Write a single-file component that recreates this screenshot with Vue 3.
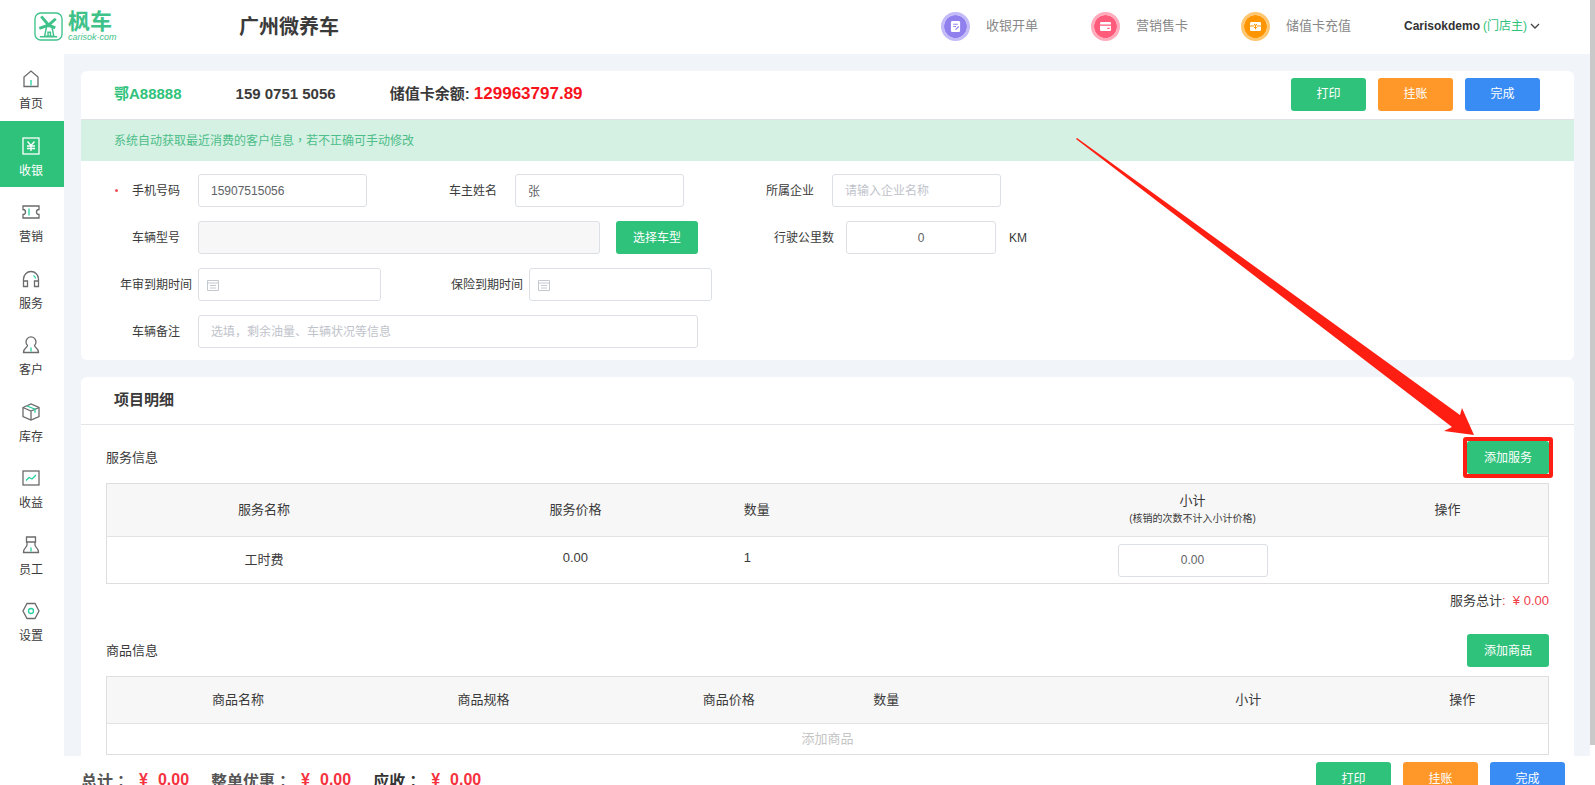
<script setup>
import { ref } from 'vue'

const menu = [
  { key: 'home', label: '首页' },
  { key: 'cash', label: '收银', active: true },
  { key: 'ticket', label: '营销' },
  { key: 'headset', label: '服务' },
  { key: 'user', label: '客户' },
  { key: 'box', label: '库存' },
  { key: 'chart', label: '收益' },
  { key: 'staff', label: '员工' },
  { key: 'gear', label: '设置' },
]

const quickLinks = [
  { key: 'bill', label: '收银开单' },
  { key: 'sale', label: '营销售卡' },
  { key: 'topup', label: '储值卡充值' },
]

const totals = [
  { label: '总计', value: '0.00' },
  { label: '整单优惠', value: '0.00' },
  { label: '应收', value: '0.00', strong: true },
]

const phone = ref('15907515056')
const owner = ref('张')
const company = ref('')
const mileage = ref('0')
const inspection = ref('')
const insurance = ref('')
const remark = ref('')
const subtotal = ref('0.00')
</script>

<template>
  <div class="shell">
    <header class="topbar">
      <a class="logo" href="#" aria-label="枫车">
        <svg class="logo-mark" viewBox="0 0 30 30" fill="none" stroke="#3fc28a">
          <rect x="1" y="1" width="28" height="28" rx="6" stroke-width="1.4" />
          <path d="M7.500 4.500l7.500 9M22.500 7L15 13.500M15 13.500L5.500 17M15 13.500l7 3" stroke-width="3" />
          <path d="M13 15l-2 10h9.500l-2-10z" stroke-width="1.5" />
          <path d="M14.500 25v-4h2.500v4M6 25.500h18" stroke-width="1.5" />
        </svg>
        <span class="logo-text">
          <b>枫车</b>
          <i>carisok·com</i>
        </span>
      </a>
      <h1 class="shop">广州微养车</h1>
      <nav class="quick">
        <a v-for="q in quickLinks" :key="q.key" href="#" class="quick-link">
          <span class="disc" :class="q.key">
            <svg v-if="q.key === 'bill'" viewBox="0 0 12 12">
              <rect x="1" y="0" width="10" height="12" rx="1.5" fill="#fff" />
              <path d="M3.5 3.5h5M3.5 6h3M6 9.5L9.5 6" stroke="#8f80ee" stroke-width="1.2" />
            </svg>
            <svg v-else-if="q.key === 'sale'" viewBox="0 0 12 12">
              <rect x="0" y="1" width="12" height="10" rx="1.5" fill="#fff" />
              <path d="M0 4.5h12M8 8h2.5" stroke="#ff5c7c" stroke-width="1.4" />
            </svg>
            <svg v-else viewBox="0 0 12 12">
              <rect x="0" y="1" width="12" height="10" rx="1.5" fill="#fff" />
              <path d="M0 5.5h4.5M7.5 5.5H12M4.5 3.5L6 5l1.5-1.5M6 5v4M4.5 7h3" stroke="#ff9500" stroke-width="1.1" fill="none" />
            </svg>
          </span>
          <span>{{ q.label }}</span>
        </a>
      </nav>
      <button class="account" type="button">
        <span>Carisokdemo</span>
        <span class="role">(门店主)</span>
        <svg viewBox="0 0 10 6" fill="none" stroke="#444" stroke-width="1.3"><path d="M1 1l4 4 4-4" /></svg>
      </button>
    </header>

    <div class="body">
      <nav class="side">
        <a v-for="m in menu" :key="m.key" href="#" class="side-item" :class="{ active: m.active }">
          <svg viewBox="0 0 18 18" fill="none" stroke="currentColor" stroke-width="1.3">
            <template v-if="m.key === 'home'">
              <path d="M2 16.500V7l7-6 7 6v9.500z" />
              <path class="accent" d="M9 10v5.500" />
            </template>
            <template v-else-if="m.key === 'cash'">
              <rect x="1" y="1" width="16" height="16" />
              <path d="M5.500 4.500L9 8.500l3.500-4M5 9h8M5 11.500h8M9 8.500V14" />
            </template>
            <template v-else-if="m.key === 'ticket'">
              <path d="M1 3h16v3.500a2.500 2.500 0 0 0 0 5V15H1v-3.500a2.500 2.500 0 0 0 0-5z" />
              <path class="accent" d="M7 5.500v7" />
            </template>
            <template v-else-if="m.key === 'headset'">
              <path d="M1.500 16V9a7.500 7.500 0 0 1 15 0v7M1.500 11h4v5.500h-4zM12.500 11h4v5.500h-4z" />
              <path class="accent" d="M11.500 5.500a4 4 0 0 1 2 3" />
            </template>
            <template v-else-if="m.key === 'user'">
              <path d="M5.500 9.500a5 5 0 1 1 7 0c-.5 1.500 4 2.500 4 7h-15c0-4.500 4.500-5.500 4-7z" />
              <path class="accent" d="M9 11.500v4" />
            </template>
            <template v-else-if="m.key === 'box'">
              <path d="M1 4.500L9 1l8 3.500v9L9 17l-8-3.500zM1 4.500L9 8l8-3.500M9 8v9" />
              <path class="accent" d="M5 3l8 3.200v3.500" />
            </template>
            <template v-else-if="m.key === 'chart'">
              <rect x="1" y="2" width="16" height="14" />
              <path class="accent" d="M4 11.500l3-3 3 1.500 4-4" />
            </template>
            <template v-else-if="m.key === 'staff'">
              <path d="M4.500 1h9v5h-9zM5 6v3c0 2.500-3.500 2.500-3.500 7.500h15c0-5-3.500-5-3.500-7.500V6" />
              <path class="accent" d="M9 11.500v4" />
            </template>
            <template v-else>
              <path d="M5 1.500h8L17 9l-4 7.500H5L1 9z" />
              <circle class="accent" cx="9" cy="9" r="2.500" />
            </template>
          </svg>
          <span>{{ m.label }}</span>
        </a>
      </nav>

      <main class="content">
        <section class="card">
          <div class="card-top">
            <strong class="plate">鄂A88888</strong>
            <strong>159 0751 5056</strong>
            <strong class="balance">储值卡余额: <em>129963797.89</em></strong>
            <div class="actions">
              <button class="btn green" type="button">打印</button>
              <button class="btn orange" type="button">挂账</button>
              <button class="btn blue" type="button">完成</button>
            </div>
          </div>
          <p class="notice">系统自动获取最近消费的客户信息<span class="mark">，</span>若不正确可手动修改</p>
          <form class="form" @submit.prevent>
            <div class="row">
              <div class="field">
                <label for="phone" class="required">手机号码</label>
                <input id="phone" v-model="phone" type="text" />
              </div>
              <div class="field">
                <label for="owner">车主姓名</label>
                <input id="owner" v-model="owner" type="text" />
              </div>
              <div class="field">
                <label for="company">所属企业</label>
                <input id="company" v-model="company" type="text" placeholder="请输入企业名称" />
              </div>
            </div>
            <div class="row">
              <div class="field">
                <label for="model">车辆型号</label>
                <input id="model" class="w-model" type="text" disabled />
                <button class="btn green wide" type="button">选择车型</button>
              </div>
              <div class="field">
                <label for="mileage" class="mid">行驶公里数</label>
                <input id="mileage" v-model="mileage" class="number" type="text" />
                <span class="unit">KM</span>
              </div>
            </div>
            <div class="row">
              <div class="field">
                <label for="inspection" class="long">年审到期时间</label>
                <span class="date">
                  <svg viewBox="0 0 12 12" fill="none" stroke="#c4c8d0"><path d="M.5 1.500h11v10H.5zM.5 4h11M3 6.500h6M3 9h6" /></svg>
                  <input id="inspection" v-model="inspection" type="text" />
                </span>
              </div>
              <div class="field">
                <label for="insurance" class="long">保险到期时间</label>
                <span class="date">
                  <svg viewBox="0 0 12 12" fill="none" stroke="#c4c8d0"><path d="M.5 1.500h11v10H.5zM.5 4h11M3 6.500h6M3 9h6" /></svg>
                  <input id="insurance" v-model="insurance" type="text" />
                </span>
              </div>
            </div>
            <div class="row">
              <div class="field">
                <label for="remark">车辆备注</label>
                <input id="remark" v-model="remark" class="w-remark" type="text" placeholder="选填，剩余油量、车辆状况等信息" />
              </div>
            </div>
          </form>
        </section>

        <section class="card">
          <h2 class="card-title">项目明细</h2>
          <div class="details">
            <div class="bar">
              <h3>服务信息</h3>
              <div class="marked">
                <button class="btn green wide" type="button">添加服务</button>
                <span class="frame"></span>
                <svg class="arrow" viewBox="0 0 400 300"><path d="M1 2L2 1 385 278 387 271 399 298 369 294 377 290z" fill="#ff1f12" /></svg>
              </div>
            </div>
            <table class="services">
              <thead>
                <tr>
                  <th>服务名称</th>
                  <th>服务价格</th>
                  <th class="qty">数量</th>
                  <th>小计<small>(核销的次数不计入小计价格)</small></th>
                  <th>操作</th>
                </tr>
              </thead>
              <tbody>
                <tr>
                  <td>工时费</td>
                  <td class="figure">0.00</td>
                  <td class="qty figure">1</td>
                  <td><input v-model="subtotal" class="number" type="text" aria-label="小计" /></td>
                  <td></td>
                </tr>
              </tbody>
            </table>
            <p class="sum">服务总计<span>: &nbsp;¥ 0.00</span></p>
            <div class="bar">
              <h3>商品信息</h3>
              <button class="btn green wide" type="button">添加商品</button>
            </div>
            <table class="goods">
              <thead>
                <tr>
                  <th>商品名称</th>
                  <th>商品规格</th>
                  <th>商品价格</th>
                  <th class="qty">数量</th>
                  <th>小计</th>
                  <th>操作</th>
                </tr>
              </thead>
              <tbody>
                <tr>
                  <td colspan="6" class="empty">添加商品</td>
                </tr>
              </tbody>
            </table>
          </div>
        </section>
      </main>
    </div>

    <footer class="footer">
      <div v-for="t in totals" :key="t.label" class="total" :class="{ strong: t.strong }">
        <span>{{ t.label }}<span class="mark">：</span></span>
        <span class="money"><span>¥</span><span>{{ t.value }}</span></span>
      </div>
      <div class="actions">
        <button class="btn green" type="button">打印</button>
        <button class="btn orange" type="button">挂账</button>
        <button class="btn blue" type="button">完成</button>
      </div>
    </footer>
    <div class="scroll-thumb"></div>
  </div>
</template>

<style>
body {
  margin: 0;
  overflow: hidden;
}
</style>

<style scoped>
.shell {
  position: relative;
  display: grid;
  grid-template-rows: 54px minmax(0, 1fr) 29px;
  height: 100vh;
  overflow: hidden;
  background: #fff;
  color: #3a3a3a;
  font: 12px/16px "Liberation Sans", "Noto Sans CJK SC", sans-serif;
}
.shell * {
  box-sizing: border-box;
}
a {
  color: inherit;
  text-decoration: none;
}
button,
input {
  font: inherit;
}
h1,
h2,
h3,
p {
  margin: 0;
}
.mark {
  font-family: "Noto Sans CJK TC", sans-serif;
}

/* top bar */
.topbar {
  display: flex;
  align-items: center;
  padding: 0 55px 2px 34px;
}
.logo {
  display: flex;
  align-items: center;
  gap: 5px;
  width: 205px;
  color: #3fc28a;
}
.logo-mark {
  width: 29px;
  height: 29px;
}
.logo-text {
  display: flex;
  flex-direction: column;
}
.logo-text b {
  font-size: 22px;
  line-height: 22px;
  font-weight: 700;
}
.logo-text i {
  font-size: 9px;
  line-height: 9px;
}
.shop {
  padding-top: 2px;
  font-size: 20px;
  line-height: 28px;
}
.quick {
  display: flex;
  margin-left: auto;
}
.quick-link {
  display: flex;
  align-items: center;
  gap: 16px;
  width: 150px;
  color: #888;
  font-size: 13px;
}
.disc {
  display: grid;
  place-items: center;
  width: 29px;
  height: 29px;
  border: 3px solid;
  border-radius: 50%;
  background-clip: padding-box;
}
.disc svg {
  width: 11px;
  height: 11px;
}
.disc.bill {
  background-color: #8f80ee;
  border-color: #c3baf8;
}
.disc.sale {
  background-color: #ff5c7c;
  border-color: #ffabbb;
}
.disc.topup {
  background-color: #ff9500;
  border-color: #ffc670;
}
.account {
  display: flex;
  align-items: center;
  gap: 3px;
  margin-left: 13px;
  padding: 0;
  border: 0;
  background: none;
  color: #333;
  font-weight: 700;
  white-space: nowrap;
}
.account .role {
  color: #2fc27a;
  font-weight: 400;
}
.account svg {
  width: 10px;
  height: 6px;
}

/* side menu */
.body {
  display: flex;
  min-height: 0;
}
.side {
  flex: none;
  display: grid;
  grid-auto-rows: 1fr;
  width: 64px;
  height: 599px;
}
.side-item {
  display: flex;
  flex-direction: column;
  align-items: center;
  gap: 8px;
  padding: 16px 2px 0 0;
}
.side-item svg {
  width: 18px;
  height: 18px;
  color: #6b6b6b;
}
.side-item .accent {
  stroke: #25cfa0;
}
.side-item.active {
  background: #2fc27a;
  color: #fff;
}
.side-item.active svg {
  color: #fff;
}

/* content */
.content {
  flex: 1;
  display: flex;
  flex-direction: column;
  gap: 17px;
  min-width: 0;
  margin-right: 5px;
  padding: 17px 16px 0 17px;
  background: #f1f5fa;
}
.card {
  flex: none;
  border-radius: 6px;
  background: #fff;
}
.card-top {
  display: flex;
  align-items: center;
  gap: 54px;
  height: 49px;
  padding: 0 34px 2px 33px;
  border-bottom: 1px solid #dfe3e6;
  font-size: 15px;
}
.plate {
  color: #2fc27a;
}
.balance em {
  color: #f8141c;
  font-size: 17px;
  font-style: normal;
}
.actions {
  display: flex;
  gap: 12px;
  margin-left: auto;
}
.btn {
  width: 75px;
  height: 33px;
  padding: 0;
  border: 0;
  border-radius: 3px;
  color: #fff;
  font-size: 12px;
  font-weight: 400;
}
.btn.wide {
  width: 82px;
}
.btn.green {
  background: #2fc27a;
}
.btn.orange {
  background: #ff9829;
}
.btn.blue {
  background: #3a8cf5;
}
.notice {
  padding: 12px 33px;
  background: #d5f1e3;
  color: #4dbd89;
}

/* customer form */
.form {
  display: flex;
  flex-direction: column;
  gap: 14px;
  padding: 13px 32px 12px;
}
.row {
  display: flex;
  gap: 63px;
}
.field {
  display: flex;
  align-items: center;
}
.field label {
  width: 85px;
  padding-right: 18px;
  text-align: right;
}
.field label.mid {
  padding-right: 12px;
}
.field label.long {
  padding-right: 6px;
}
.required {
  display: flex;
  justify-content: space-between;
  align-items: center;
}
.required::before {
  content: "";
  width: 3px;
  height: 3px;
  margin-left: 2px;
  border-radius: 50%;
  background: #f0505a;
}
input {
  width: 169px;
  height: 33px;
  padding: 0 12px;
  border: 1px solid #dcdfe4;
  border-radius: 3px;
  outline: 0;
  background: #fff;
  color: #606266;
}
input::placeholder {
  color: #bfc3cb;
}
input:disabled {
  background: #f7f7f7;
}
input.w-model {
  width: 402px;
  margin-right: 16px;
}
input.w-remark {
  width: 500px;
}
input.number {
  width: 150px;
  text-align: center;
}
.unit {
  margin-left: 13px;
}
.date {
  display: flex;
  align-items: center;
  width: 183px;
  height: 33px;
  padding-left: 8px;
  border: 1px solid #dcdfe4;
  border-radius: 3px;
}
.date svg {
  flex: none;
  width: 12px;
  height: 12px;
}
.date input {
  flex: 1;
  width: 0;
  height: 31px;
  border: 0;
}

/* details */
.card-title {
  padding: 13px 33px 14px;
  border-bottom: 1px solid #e3e5e8;
  font-size: 15px;
  line-height: 20px;
}
.details {
  padding: 16px 25px 40px;
}
.bar {
  display: flex;
  justify-content: space-between;
  align-items: center;
  margin-bottom: 9px;
}
.bar h3 {
  font-size: 13px;
  font-weight: 400;
}
.marked {
  position: relative;
  display: flex;
}
.frame {
  position: absolute;
  inset: -4px;
  border: 4px solid #ff1f12;
  border-radius: 3px;
  pointer-events: none;
}
.arrow {
  position: absolute;
  right: 74px;
  bottom: 37px;
  width: 400px;
  height: 300px;
  pointer-events: none;
}
table {
  width: 100%;
  border: 1px solid #dedede;
  border-collapse: collapse;
  table-layout: fixed;
  font-size: 13px;
  line-height: 18px;
}
th,
td {
  height: 47px;
  padding: 0;
  font-weight: 400;
  text-align: center;
}
thead tr {
  border-bottom: 1px solid #e3e3e3;
  background: #f7f7f7;
}
th small {
  display: block;
  font-size: 10px;
}
.qty {
  padding-left: 14px;
  text-align: left;
}
.figure {
  padding-bottom: 4px;
}
td input {
  font-size: 12px;
}
.services th {
  width: 21.4%;
  height: 53px;
}
.services th:first-child {
  width: 312px;
}
.services th:last-child {
  width: 200px;
}
.goods th:nth-child(1) {
  width: 18.2%;
}
.goods th:nth-child(2) {
  width: 15.9%;
}
.goods th:nth-child(3),
.goods th:nth-child(4) {
  width: 18.1%;
}
.goods th:nth-child(6) {
  width: 172px;
}
.goods .empty {
  height: 31px;
  color: #c5c5c5;
}
.sum {
  padding: 8px 0 24px;
  font-size: 13px;
  line-height: 18px;
  text-align: right;
}
.sum span {
  color: #f0404a;
}

/* footer */
.footer {
  z-index: 1;
  display: flex;
  align-items: flex-start;
  gap: 22px;
  overflow: hidden;
  padding: 6px 30px 0 81px;
  background: #fff;
  font-size: 16px;
  font-weight: 700;
}
.total {
  display: flex;
  gap: 10px;
  color: #555;
  line-height: 36px;
}
.total.strong {
  color: #333;
}
.money {
  display: flex;
  gap: 10px;
  color: #f5333f;
}
.scroll-thumb {
  position: absolute;
  top: 0;
  right: 0;
  bottom: 40px;
  width: 5px;
  background: #c9c9c9;
}
</style>
